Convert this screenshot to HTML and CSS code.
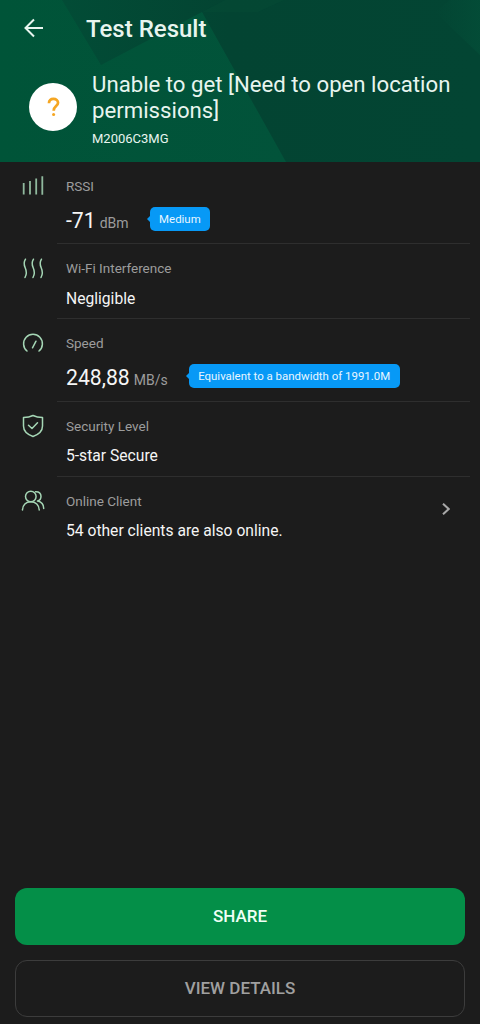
FILE: index.html
```html
<!DOCTYPE html>
<html lang="en">
<head>
<meta charset="utf-8">
<title>Test Result</title>
<link rel="stylesheet" href="styles.css">
</head>
<body>
<div class="screen">
  <header class="hero">
    <svg class="hero-bg" viewBox="0 0 480 162" preserveAspectRatio="none" aria-hidden="true">
      <defs>
        <linearGradient id="base" x1="0" y1="0" x2="1" y2="0"><stop offset="0" stop-color="#005438"/><stop offset=".6" stop-color="#02533a"/></linearGradient>
        <linearGradient id="facet" x1="0" y1="0" x2="1" y2="0"><stop offset="0" stop-color="#024c36"/><stop offset=".4" stop-color="#034432"/><stop offset="1" stop-color="#034533"/></linearGradient>
        <linearGradient id="corner" x1="0" y1="0" x2="1" y2="0"><stop offset="0" stop-color="#045039" stop-opacity="0"/><stop offset="1" stop-color="#045039" stop-opacity=".6"/></linearGradient>
      </defs>
      <path fill="url(#base)" d="M0 0h480v162H0z"/>
      <path fill="url(#facet)" d="M62 0L101 65L202 12L286 162H480V0z"/>
      <path fill="#055039" opacity=".3" d="M202 12L225 0H284L258 12z"/>
      <path fill="url(#corner)" d="M450 0h30v55L435 12z"/>
    </svg>
    <div class="bar">
      <svg class="back" viewBox="0 0 20 20"><path d="M19 10H1.8M10 1.5L1.5 10L10 18.5"/></svg>
      <h1 class="title">Test Result</h1>
    </div>
    <div class="device">
      <div class="badge"><svg viewBox="0 0 14 22"><path d="M2 6.8C2 3.7 4 2 6.900 2S12 3.800 12 6.400C12 10 7.200 10.200 7.200 15"/><circle cx="7.100" cy="19.300" r="1.700"/></svg></div>
      <div>
        <p class="network">Unable to get [Need to open location permissions]</p>
        <p class="model">M2006C3MG</p>
      </div>
    </div>
  </header>

  <main class="list">
    <section class="row tall">
      <svg class="icon" viewBox="0 0 24 24"><path class="bars" d="M2.700 9V20.500M9 7V20.500M15.200 4.500V20.500M21.300 2.200V20.800"/></svg>
      <div class="body">
        <h2 class="label">RSSI</h2>
        <div class="reading"><span class="number">-71</span><span class="unit">dBm</span><span class="tag">Medium</span></div>
      </div>
    </section>
    <section class="row">
      <svg class="icon" viewBox="0 0 24 24"><path d="M4.500 3.200C-.500 11 9 12.500 4 21.500M12.500 3.200C7.500 11 17 12.500 12 21.500M20.500 3.200C15.500 11 25 12.500 20 21.500"/></svg>
      <div class="body">
        <h2 class="label">Wi-Fi Interference</h2>
        <p class="value">Negligible</p>
      </div>
    </section>
    <section class="row tall speed">
      <svg class="icon" viewBox="0 0 24 24"><path d="M6 20A9.400 9.400 0 1 1 18 20M11.500 16.800L15 10.200"/></svg>
      <div class="body">
        <h2 class="label">Speed</h2>
        <div class="reading"><span class="number">248,88</span><span class="unit">MB/s</span><span class="tag">Equivalent to a bandwidth of 1991.0M</span></div>
      </div>
    </section>
    <section class="row compact">
      <svg class="icon" viewBox="0 0 24 24"><path d="M12 1.500C15 3 18 3.500 21.500 3.500V12C21.500 17 17.500 20.500 12 22.500C6.500 20.500 2.500 17 2.500 12V3.500C6 3.500 9 3 12 1.500zM7.500 11.200L11 14.500L16.500 8.700"/></svg>
      <div class="body">
        <h2 class="label">Security Level</h2>
        <p class="value">5-star Secure</p>
      </div>
    </section>
    <section class="row compact last">
      <svg class="icon" viewBox="0 0 24 24"><circle cx="9.800" cy="7.500" r="5.300"/><path d="M1.500 21C1.500 16 5 12.800 9.800 12.800S18.200 16 18.200 21M14.500 2.800C18 2.500 20 4.500 20 7.200C20 9.500 18.500 11.500 16.500 12C20.500 12.700 22.700 15.500 22.700 19.500"/></svg>
      <div class="body">
        <h2 class="label">Online Client</h2>
        <p class="value">54 other clients are also online.</p>
      </div>
      <svg class="chevron" viewBox="0 0 8 12"><path d="M1 .7L6.700 6L1 11.300"/></svg>
    </section>
  </main>

  <footer class="actions">
    <button class="btn primary">SHARE</button>
    <button class="btn outline">VIEW DETAILS</button>
  </footer>
</div>
</body>
</html>
```
FILE: styles.css
```css
* { box-sizing: border-box; margin: 0; padding: 0; }
body { background: #1c1c1c; font-family: Roboto, "Liberation Sans", sans-serif; color: #f5f5f5; }
.screen { width: 480px; height: 1024px; display: flex; flex-direction: column; overflow: hidden; }
.hero { position: relative; height: 162px; flex: none; color: #e8f5ef; }
.hero-bg { position: absolute; inset: 0; width: 100%; height: 100%; z-index: -1; }
.bar { height: 56px; display: flex; align-items: center; padding-left: 24px; gap: 42px; }
.back { width: 20px; height: 20px; fill: none; stroke: #e8f5ef; stroke-width: 2; }
.title { font-size: 24px; line-height: 28px; font-weight: 500; padding-top: 2px; }
.device { display: flex; gap: 15px; padding: 15px 20px 0 29px; }
.badge { width: 48px; height: 48px; flex: none; margin-top: 12px; border-radius: 50%; background: #fff; display: flex; align-items: center; justify-content: center; }
.badge svg { width: 13px; height: 20px; fill: none; stroke: #f5a623; stroke-width: 3; }
.badge circle { fill: #f5a623; stroke: none; }
.network { font-size: 22.200px; line-height: 26px; }
.model { font-size: 13px; line-height: 16px; margin-top: 8px; }

.row { height: 75px; display: flex; padding: 0 10px 0 21px; }
.row.tall { height: 82px; }
.row.speed { height: 83px; }
.icon { width: 24px; height: 24px; flex: none; margin: 12px 12px 0 0; fill: none; stroke: #a5d6b5; stroke-width: 1.500; stroke-linecap: round; stroke-linejoin: round; }
.icon .bars { stroke: #8fb89d; stroke-width: 1.800; stroke-linecap: butt; }
.body { flex: 1; padding: 16px 0 0 9px; border-bottom: 1px solid #2e2e2e; }
.last .body { border-bottom: 0; }
.label { font-size: 13.500px; line-height: 16px; font-weight: 400; color: #9c9c9c; }
.value { font-size: 15.650px; line-height: 20px; margin-top: 13px; }
.compact .value { margin-top: 12px; }
.reading { display: flex; align-items: baseline; margin-top: 13px; line-height: 28px; }
.number { font-size: 21.200px; }
.unit { font-size: 14px; color: #9c9c9c; margin-left: 4px; }
.tag { position: relative; height: 24px; margin-left: 21px; padding: 0 9.500px; border-radius: 5px; background: #0799f6; color: #e8f6ff; font-size: 11.450px; line-height: 25px; align-self: flex-start; }
.tag::before { content: ""; position: absolute; left: -3px; top: 9px; border: 3px solid transparent; border-left: 0; border-right-color: #0799f6; }
.chevron { width: 8px; height: 12px; margin: 26px 20px 0 0; fill: none; stroke: #a8a8a8; stroke-width: 2; }

.actions { margin-top: auto; padding: 0 15px 7px; display: grid; gap: 15px; }
.btn { height: 57px; padding-bottom: 1px; border: 0; border-radius: 12px; font: 500 17px/20px Roboto, "Liberation Sans", sans-serif; }
.primary { background: #048f48; color: #f0fff6; }
.outline { background: transparent; border: 1px solid #3c3c3c; color: #a0a0a0; }
```
